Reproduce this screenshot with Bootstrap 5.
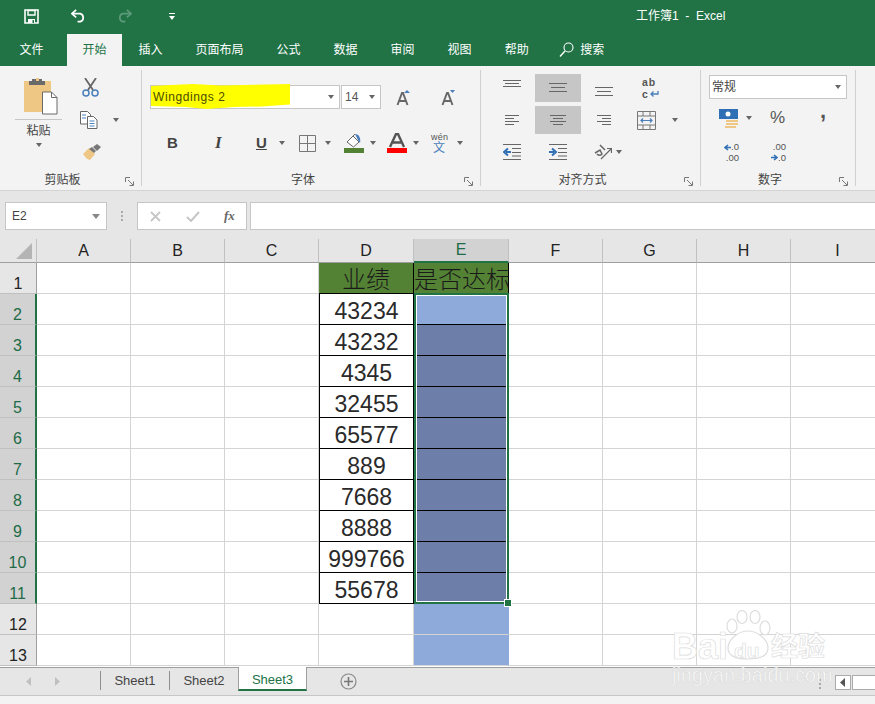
<!DOCTYPE html>
<html lang="zh-CN">
<head>
<meta charset="UTF-8" />
<title>工作簿1 - Excel</title>
<link href="https://cdn.jsdelivr.net/npm/bootstrap@5.3.2/dist/css/bootstrap.min.css" rel="stylesheet" />
<style>
  html, body { margin: 0; width: 875px; height: 704px; overflow: hidden; }
  body { position: relative; background: #f3f3f3; color: #444; font: 12px "Liberation Sans", "Noto Sans CJK SC", sans-serif; }
  svg { display: block; flex: none; }

  /* title bar and tabs */
  .xl-top { background: #217346; color: #fff; height: 66px; }
  .titlebar { height: 34px; padding-bottom: 2px; }
  .qat-save { margin-left: 24px; }
  .qat-undo { margin-left: 32px; }
  .qat-redo { margin-left: 31px; }
  .qat-more { margin-left: 37px; }
  .doc-title { margin-left: 461px; font-size: 12px; padding-bottom: 4px; white-space: pre; }
  .tabs { height: 32px; padding-left: 3px; }
  .tabs span { padding: 8px 16.5px 0; line-height: 16px; font-size: 12px; white-space: nowrap; }
  .tabs span.active { background: #f3f3f3; color: #217346; margin-left: 7px; padding: 8px 15.5px 0; }
  .tabs span.search { padding-left: 6px; }
  .tabs svg { margin: 8px 0 0 14px; }

  /* ribbon */
  .ribbon { height: 125px; background: #f3f3f3; border-bottom: 1px solid #d4d4d4; }
  .group { margin-top: 4px; height: 116px; border-right: 1px solid #d0d0d0; }
  .g-clip { width: 142px; }
  .g-font { width: 339px; }
  .g-align { width: 220px; }
  .g-num { width: 155px; }
  .group-body { height: 104px; display: flow-root; }
  .group-foot { height: 12px; line-height: 12px; display: grid; grid-template-columns: 1fr auto 1fr; font-size: 12px; padding-right: 16px; }
  .group-foot svg { justify-self: end; margin: 3px -9px 0 0; }
  .arr { width: 0; height: 0; border: 3px solid transparent; border-top: 4px solid #666; border-bottom: 0; flex: none; }

  .paste-col { width: 47px; margin-left: 15px; }
  .paste-col svg { margin: 7px 0 4px 8px; }
  .paste-col .line { border-top: 1px solid #c6c6c6; }
  .paste-col .lbl { text-align: center; font-size: 12px; margin-top: 3px; line-height: 16px; }
  .paste-col .arr { margin: 4px auto 0; }
  .clip-col svg.cut { margin: 8px 0 0 20px; }
  .clip-row { margin: 14px 0 0 18px; }
  .clip-row .arr { margin-left: 15px; }
  .clip-col svg.brush { margin: 15px 0 0 21px; }

  .combo { background: #fff; border: 1px solid #c6c6c6; height: 24px; }
  .combo .arr { position: absolute; right: 5px; top: 9px; }
  .font-row1 { padding: 15px 0 0 8px; }
  .font-name { width: 190px; line-height: 22px; padding-left: 2px; color: #4a4a00; font-size: 12px; letter-spacing: .6px; }
  .font-name b { font-weight: 400; position: relative; z-index: 1; }
  .font-name::before { content: ""; position: absolute; left: 0; top: -2px; width: 139px; height: 25px; background: #ff0; clip-path: polygon(0 8%, 30% 0, 50% 6%, 100% 0, 100% 82%, 80% 90%, 60% 92%, 40% 100%, 25% 92%, 0 88%); }
  .font-size { width: 40px; margin-left: 1px; line-height: 22px; padding-left: 3px; color: #555; font-size: 12px; }
  .grow { margin-left: 15px; }
  .shrink { margin-left: 30px; }
  .font-row2 { height: 30px; margin-top: 19px; }
  .fmt { font-size: 15px; line-height: 20px; color: #444; font-weight: 700; flex: none; }
  .f-b { margin-left: 25px; width: 11px; }
  .f-i { margin-left: 37px; width: 9px; font-style: italic; font-family: "Liberation Serif", serif; font-size: 17px; }
  .f-u { margin-left: 32px; width: 12px; text-decoration: underline; }
  .a1 { margin-left: 11px; }
  .bd { margin-left: 14px; }
  .a2 { margin-left: 9px; }
  .fill { margin-left: 13px; }
  .a3 { margin-left: 6px; }
  .fc { margin-left: 11px; }
  .a4 { margin-left: 6px; }
  .wen { margin-left: 12px; width: 16px; text-align: center; color: #555; }
  .wen div { font-size: 9px; height: 9px; line-height: 9px; letter-spacing: .3px; }
  .wen p { margin: 0; font-size: 12px; height: 12px; line-height: 12px; color: #4a7ebb; }
  .a5 { margin-left: 10px; }

  .al-grid { display: grid; grid-template-columns: 46px 46px 46px; grid-auto-rows: 28px; row-gap: 4px; margin: 4px 0 0 8px; }
  .al-cell { display: flex; align-items: center; justify-content: center; }
  .al-cell.on { background: #c6c6c6; }
  .al-side { margin-left: 10px; width: 60px; padding-top: 4px; }
  .al-side > * { height: 28px; margin-bottom: 4px; }
  .al-side .arr { margin-left: 16px; }
  .wrap-txt { font-size: 10.500px; line-height: 12px; color: #555; font-weight: 700; letter-spacing: 1px; padding: 2px 0 0 5px; }
  .wrap-txt svg { margin: 3px 0 0 1px; }

  .num-combo { width: 138px; height: 24px; margin: 5px 0 0 8px; line-height: 22px; padding-left: 2px; color: #444; }
  .num-row1 { margin-top: 5px; height: 28px; }
  .cur { margin-left: 18px; }
  .cur-arr { margin-left: 7px; }
  .num-row2 { margin-top: 10px; }
  .pct { margin-left: 18px; font-size: 17px; color: #555; line-height: 20px; width: 18px; }
  .comma { margin-left: 32px; font-size: 22px; font-weight: 700; color: #555; line-height: 18px; margin-top: -15px; }
  .dec { width: 26px; font-size: 9.500px; line-height: 10.500px; color: #555; text-align: right; }
  .dec span { display: inline-flex; align-items: center; }
  .dec-l { margin: 0 21px 0 12px; }

  /* formula bar */
  .formula { height: 48px; background: #e6e6e6; padding-top: 11px; }
  .namebox { width: 102px; height: 28px; margin-left: 5px; background: #fff; border: 1px solid #c6c6c6; padding: 0 6px; font-size: 12px; line-height: 26px; }
  .namebox .arr { border-width: 4px; border-top: 5px solid #888; border-bottom: 0; }
  .dots { width: 2px; height: 10px; margin: 9px 14px 0 14px; background: repeating-linear-gradient(#aaa 0 2px, transparent 2px 4px); }
  .fxbox { width: 110px; height: 28px; background: #fff; border: 1px solid #c6c6c6; }
  .fx-x { margin-left: 12px; }
  .fx-ok { margin-left: 25px; }
  .fxbox i { margin-left: 24px; font: italic 700 13px "Liberation Serif", serif; color: #666; }
  .fbar { flex: 1; height: 28px; margin-left: 3px; background: #fff; border: 1px solid #c6c6c6; border-right: 0; }

  /* sheet */
  .sheet-wrap { height: 428px; overflow: hidden; background: #fff; position: relative; }
  .sheet { table-layout: fixed; border-collapse: separate; border-spacing: 0; width: 883px; font-size: 16px; color: #222; }
  .sheet th { background: #e6e6e6; font-weight: 400; text-align: center; padding: 0; }
  .sheet thead th { height: 24px; border-right: 1px solid #c0c0c0; border-bottom: 1px solid #9f9f9f; line-height: 22px; }
  .sheet tbody th { border-right: 1px solid #9f9f9f; border-bottom: 1px solid #c0c0c0; vertical-align: bottom; line-height: 18px; }
  .sheet td { height: 31px; padding: 0; border-right: 1px solid #d4d4d4; border-bottom: 1px solid #d4d4d4; text-align: center; vertical-align: bottom; font-size: 23px; line-height: 25px; white-space: nowrap; overflow: visible; color: #2a2a2a; }
  .sheet thead th.sel-col { background: #d2d2d2; color: #1d6b47; border-bottom: 2px solid #217346; }
  .sheet tbody th.sel-row { background: #d2d2d2; color: #1d6b47; border-right: 2px solid #217346; }
  .sheet td.b { border: 0 solid #000; border-width: 0 1px 1px 0; }
  .sheet td.bl { border-left-width: 1px; }
  .sheet tbody tr:first-child td.b { border-color: #000; }
  .sheet td.hd { background: #548235; color: #1a1a1a; font-weight: 300; font-size: 24px; font-family: "Noto Sans CJK SC", sans-serif; line-height: 30px; }
  .sheet td.light { background: #8eaadb; }
  .sheet td.dark { background: #6d7fa8; }
  .sheet td.nb { border-right-color: #8eaadb; border-bottom-color: #d4d4d4; }
  .sel-box { position: absolute; left: 414px; top: 54px; width: 95px; height: 311px; border: 2px solid #217346; outline: 1px solid #fff; outline-offset: -3px; pointer-events: none; }
  .sel-box::after { content: ""; position: absolute; right: -4px; bottom: -4px; width: 6px; height: 6px; background: #217346; outline: 1px solid #fff; }

  /* sheet tabs */
  .sheetbar { height: 29px; background: #e6e6e6; border-top: 1px solid #9f9f9f; border-bottom: 1px solid #c6c6c6; font-size: 13px; }
  .sheetbar .nav-l { margin: 9px 0 0 26px; }
  .sheetbar .nav-r { margin: 9px 0 0 24px; }
  .stab { height: 25px; line-height: 22px; text-align: center; width: 69px; }
  .stab.plain { border-left: 1px solid #8f8f8f; height: 19px; line-height: 19px; margin-top: 3px; }
  .stab.first { margin-left: 40px; }
  .stab.active { background: #fff; color: #217346; width: 69px; height: 24px; border: 1px solid #9f9f9f; border-top: 0; border-bottom: 2px solid #217346; margin-top: -1px; line-height: 25px; }
  .add { margin: 5px 0 0 33px; }
  .rdots { margin: 11px 0 0 462px; width: 2px; height: 12px; background: repeating-linear-gradient(#aaa 0 2px, transparent 2px 4px); }
  .hbtn { width: 16px; height: 15px; margin: 7px 0 0 14px; background: #fff; border: 1px solid #ababab; }
  .hbtn svg { margin: 2px 0 0 4px; }
  .hthumb { flex: 1; height: 15px; margin: 7px 0 0 1px; background: #fff; border: 1px solid #ababab; border-right: 0; }
  .status { height: 8px; background: #f3f3f3; }

  /* watermark */
  .wm { position: absolute; left: 672px; top: 610px; width: 160px; height: 76px; color: #fff; pointer-events: none; }
  .wm span { position: absolute; -webkit-text-stroke: .7px #ddd; line-height: 1; white-space: nowrap; }
  .wm svg { position: absolute; left: 53px; top: 0; }
  .wm-bai { left: 0; top: 19px; font: 700 36px "Liberation Sans", sans-serif; }
  .wm-du { left: 62px; top: 30px; font: 700 21px "Liberation Sans", sans-serif; }
  .wm-cn { left: 99px; top: 21px; font: 700 27px "Noto Sans CJK SC", sans-serif; }
  .wm-url { left: 0; top: 56px; font: 400 19.500px "Liberation Sans", sans-serif; letter-spacing: .2px; }
</style>
</head>
<body>

<!-- title bar + tabs -->
<div class="xl-top">
  <div class="titlebar d-flex align-items-center">
    <svg class="qat-save" width="15" height="15" viewBox="0 0 15 15"><path d="M1 1h13v13H1z" fill="none" stroke="#fff" stroke-width="1.600"/><path d="M4 1.500h7v4.500H4z" fill="none" stroke="#fff" stroke-width="1.400"/><path d="M4 10h7v4H4z" fill="#fff"/><path d="M8.500 11h1.500v3H8.500z" fill="#217346"/></svg>
    <svg class="qat-undo" width="15" height="14" viewBox="0 0 16 14"><path d="M1 4.500h9a4.500 4.500 0 0 1 0 8.500H7" fill="none" stroke="#fff" stroke-width="1.800"/><path d="M5.500 0.500L1 4.500l4.500 4" fill="none" stroke="#fff" stroke-width="1.800"/></svg>
    <svg class="qat-redo" width="15" height="14" viewBox="0 0 16 14"><path d="M15 4.500H6a4.500 4.500 0 0 0 0 8.500h3" fill="none" stroke="#5b9a7b" stroke-width="1.800"/><path d="M10.500 0.500l4.500 4-4.500 4" fill="none" stroke="#5b9a7b" stroke-width="1.800"/></svg>
    <svg class="qat-more" width="6" height="7" viewBox="0 0 6 7"><path d="M0 0h6v1H0z" fill="#fff"/><path d="M0 3h6L3 7z" fill="#fff"/></svg>
    <div class="doc-title">工作簿1  -  Excel</div>
  </div>
  <div class="tabs d-flex">
    <span>文件</span><span class="active">开始</span><span>插入</span><span>页面布局</span><span>公式</span><span>数据</span><span>审阅</span><span>视图</span><span>帮助</span>
    <svg width="15" height="16" viewBox="0 0 15 16"><circle cx="9.500" cy="5.500" r="4.500" fill="none" stroke="#fff" stroke-width="1.100"/><path d="M6 9L1 14.500" stroke="#fff" stroke-width="1.400"/></svg>
    <span class="search">搜索</span>
  </div>
</div>

<!-- ribbon -->
<div class="ribbon d-flex">
  <div class="group g-clip">
    <div class="group-body d-flex">
      <div class="paste-col">
        <svg width="35" height="38" viewBox="0 0 35 38"><path d="M1 4h27v31H1z" fill="#eec784"/><path d="M9 2h10v2h3v4H6V4h3z" fill="#6a6a6a"/><path d="M13 1h3v3h-3z" fill="#eec784"/><path d="M19.500 15h9l5.500 5.500V37H19.500z" fill="#fff" stroke="#6a6a6a"/><path d="M28.500 15v5.500H34" fill="none" stroke="#6a6a6a"/></svg>
        <div class="line"></div>
        <div class="lbl">粘贴</div>
        <div class="arr"></div>
      </div>
      <div class="clip-col">
        <svg class="cut" width="17" height="19" viewBox="0 0 17 19"><path d="M3 0l8 12M14 0L6 12" stroke="#666" stroke-width="1.800" fill="none"/><circle cx="4" cy="15" r="3" fill="none" stroke="#4a7ebb" stroke-width="1.500"/><circle cx="13" cy="15" r="3" fill="none" stroke="#4a7ebb" stroke-width="1.500"/></svg>
        <div class="clip-row d-flex align-items-center">
          <svg width="18" height="18" viewBox="0 0 18 18"><path d="M.5.500h7l3 3V13H.5z" fill="#fff" stroke="#666"/><path d="M7.500 5.500h6l3.500 3.500v8.500H7.500z" fill="#fff" stroke="#666"/><path d="M2 4h4M2 7h4M9.500 10h5M9.500 12.500h5M9.500 15h5" stroke="#4a7ebb"/></svg>
          <div class="arr"></div>
        </div>
        <svg class="brush" width="18" height="16" viewBox="0 0 18 16"><path d="M0 10l6-6 6 6-5 6c-2 0-5-3-7-6z" fill="#eec784"/><path d="M6 5l3-2 4 4-2 2z" fill="#777"/><path d="M10 3l4-3 4 3-4 4z" fill="#777"/></svg>
      </div>
    </div>
    <div class="group-foot"><i></i><span>剪贴板</span><svg width="9" height="9" viewBox="0 0 9 9"><path d="M.5 5V.500H5M3 3l5 5M8.500 4.500v4h-4" fill="none" stroke="#777"/></svg></div>
  </div>

  <div class="group g-font">
    <div class="group-body">
      <div class="font-row1 d-flex align-items-center">
        <div class="combo position-relative font-name"><b>Wingdings 2</b><div class="arr"></div></div>
        <div class="combo position-relative font-size">14<div class="arr"></div></div>
        <svg class="grow" width="15" height="18" viewBox="0 0 15 18"><path d="M1.500 17L6 5h1l4.500 12M3 13h7" fill="none" stroke="#666" stroke-width="1.900"/><path d="M8 5l3-3 3 3z" fill="#4a7ebb"/></svg>
        <svg class="shrink" width="15" height="18" viewBox="0 0 15 18"><path d="M1.500 17L6 5h1l4.500 12M3 13h7" fill="none" stroke="#666" stroke-width="1.900"/><path d="M9 2l2.500 3L14 2z" fill="#4a7ebb"/></svg>
      </div>
      <div class="font-row2 d-flex align-items-center">
        <span class="fmt f-b">B</span><span class="fmt f-i">I</span><span class="fmt f-u">U</span>
        <div class="arr a1"></div>
        <svg class="bd" width="17" height="17" viewBox="0 0 17 17"><path d="M.5.500h16v16H.5zM8.500.500v16M.5 8.500h16" fill="none" stroke="#777"/></svg>
        <div class="arr a2"></div>
        <svg class="fill" width="20" height="20" viewBox="0 0 20 20"><path d="M3 9l6-6 6 6-5.500 5z" fill="#fff" stroke="#666"/><path d="M9 3l2-2" stroke="#666"/><path d="M11 1c4 0 6 4 5 9l-2-3z" fill="#4a7ebb"/><path d="M0 15h20v5H0z" fill="#548235"/></svg>
        <div class="arr a3"></div>
        <svg class="fc" width="20" height="20" viewBox="0 0 20 20"><path d="M3 14L9 1h2l6 13M5.500 9.500h9" fill="none" stroke="#555" stroke-width="2.400"/><path d="M0 15h20v5H0z" fill="#f00"/></svg>
        <div class="arr a4"></div>
        <div class="wen"><div>wén</div><p>文</p></div>
        <div class="arr a5"></div>
      </div>
    </div>
    <div class="group-foot"><i></i><span>字体</span><svg width="9" height="9" viewBox="0 0 9 9"><path d="M.5 5V.500H5M3 3l5 5M8.500 4.500v4h-4" fill="none" stroke="#777"/></svg></div>
  </div>

  <div class="group g-align">
    <div class="group-body d-flex">
      <div class="al-grid">
        <div class="al-cell"><svg class="mb-2" width="18" height="8" viewBox="0 0 18 8"><path d="M0 .500h18M2 3.500h14M0 6.500h18" stroke="#666"/></svg></div>
        <div class="al-cell on"><svg width="18" height="10" viewBox="0 0 18 10"><path d="M0 .500h18M2 4.500h14M0 8.500h18" stroke="#666"/></svg></div>
        <div class="al-cell"><svg class="mt-2" width="18" height="10" viewBox="0 0 18 10"><path d="M0 .500h18M2 4.500h14M0 8.500h18" stroke="#666"/></svg></div>
        <div class="al-cell"><svg width="14" height="10" viewBox="0 0 14 10"><path d="M0 .500h14M0 3.500h9M0 6.500h14M0 9.500h9" stroke="#666"/></svg></div>
        <div class="al-cell on"><svg width="16" height="10" viewBox="0 0 16 10"><path d="M0 .500h16M3 3.500h10M0 6.500h16M3 9.500h10" stroke="#666"/></svg></div>
        <div class="al-cell"><svg width="14" height="10" viewBox="0 0 14 10"><path d="M0 .500h14M5 3.500h9M0 6.500h14M5 9.500h9" stroke="#666"/></svg></div>
        <div class="al-cell"><svg width="18" height="16" viewBox="0 0 18 16"><path d="M0 .500h18M9 4.500h9M9 8.500h9M9 12h9M0 15.500h18" stroke="#666"/><path d="M8 8H3M5 4.500L1 8l4 3.500" fill="none" stroke="#2f6fb5" stroke-width="2"/></svg></div>
        <div class="al-cell"><svg width="18" height="16" viewBox="0 0 18 16"><path d="M0 .500h18M9 4.500h9M9 8.500h9M9 12h9M0 15.500h18" stroke="#666"/><path d="M0 8h5M3 4.500L7 8l-4 3.500" fill="none" stroke="#2f6fb5" stroke-width="2"/></svg></div>
        <div class="al-cell"><svg class="ms-2" width="18" height="16" viewBox="0 0 18 16"><path d="M7 15L17 5M13 4.500h4.500V9" fill="none" stroke="#666" stroke-width="1.200"/><path d="M1 9l5-3 2 4c-2 2-4 1-5 0M6 1l5 5" fill="none" stroke="#666" stroke-width="1.500"/></svg><div class="arr ms-1"></div></div>
      </div>
      <div class="al-side">
        <div class="wrap-txt"><div>ab</div><div class="d-flex">c<svg width="9" height="7" viewBox="0 0 9 7"><path d="M8 0v3H1M3.500 .5L1 3l2.500 2.500" fill="none" stroke="#4a7ebb" stroke-width="1.300"/></svg></div></div>
        <div class="d-flex align-items-center"><svg width="19" height="19" viewBox="0 0 19 19"><path d="M.5.500h18v18H.5zM.5 5h18M.5 14h18M6 .500V5M13 .500V5M6 14v4.500M13 14v4.500" fill="none" stroke="#777"/><path d="M4 9.500h11M6 7.500l-2 2 2 2M13 7.500l2 2-2 2" fill="none" stroke="#4a7ebb" stroke-width="1.200"/></svg><div class="arr"></div></div>
      </div>
    </div>
    <div class="group-foot"><i></i><span>对齐方式</span><svg width="9" height="9" viewBox="0 0 9 9"><path d="M.5 5V.500H5M3 3l5 5M8.500 4.500v4h-4" fill="none" stroke="#777"/></svg></div>
  </div>

  <div class="group g-num">
    <div class="group-body">
      <div class="combo position-relative num-combo">常规<div class="arr"></div></div>
      <div class="num-row1 d-flex align-items-center">
        <svg class="cur" width="20" height="19" viewBox="0 0 20 19"><path d="M0 0h19v10H0z" fill="#2f6fb5"/><circle cx="9" cy="5" r="2.500" fill="#fff"/><path d="M7 11h12v2H7zM7 14h12v2H7zM6 17h11v2H6z" fill="#eec784"/></svg>
        <div class="arr cur-arr"></div>
        <span class="pct">%</span>
        <span class="comma">,</span>
      </div>
      <div class="num-row2 d-flex">
        <div class="dec dec-l"><span><svg width="7" height="7" viewBox="0 0 7 7"><path d="M7 3.500H2M4 1L1 3.500 4 6" fill="none" stroke="#2f6fb5" stroke-width="1.600"/></svg>.0</span><br>.00</div>
        <div class="dec"><span>.00</span><br><span><svg width="7" height="7" viewBox="0 0 7 7"><path d="M0 3.500h5M3 1l3 2.500L3 6" fill="none" stroke="#2f6fb5" stroke-width="1.600"/></svg>.0</span></div>
      </div>
    </div>
    <div class="group-foot"><i></i><span>数字</span><svg width="9" height="9" viewBox="0 0 9 9"><path d="M.5 5V.500H5M3 3l5 5M8.500 4.500v4h-4" fill="none" stroke="#777"/></svg></div>
  </div>
</div>

<!-- formula bar -->
<div class="formula d-flex">
  <div class="namebox d-flex justify-content-between align-items-center"><span>E2</span><div class="arr"></div></div>
  <div class="dots"></div>
  <div class="fxbox d-flex align-items-center">
    <svg class="fx-x" width="11" height="11" viewBox="0 0 11 11"><path d="M1 1l9 9M10 1l-9 9" stroke="#c6c6c6" stroke-width="1.800"/></svg>
    <svg class="fx-ok" width="14" height="11" viewBox="0 0 14 11"><path d="M1 6l4 4 8-9" fill="none" stroke="#c6c6c6" stroke-width="2"/></svg>
    <i>fx</i>
  </div>
  <div class="fbar"></div>
</div>

<!-- sheet -->
<div class="sheet-wrap">
  <table class="sheet">
    <colgroup><col width="37"><col width="94"><col width="94"><col width="94"><col width="95"><col width="95"><col width="94"><col width="94"><col width="94"><col width="94"></colgroup>
    <thead><tr><th><svg class="ms-auto me-1" width="16" height="16" viewBox="0 0 16 16"><path d="M16 0v16H0z" fill="#b4b4b4"/></svg></th><th>A</th><th>B</th><th>C</th><th>D</th><th class="sel-col">E</th><th>F</th><th>G</th><th>H</th><th>I</th></tr></thead>
    <tbody>
      <tr><th>1</th><td></td><td></td><td></td><td class="b hd">业绩</td><td class="b hd">是否达标</td><td></td><td></td><td></td><td></td></tr>
      <tr><th class="sel-row">2</th><td></td><td></td><td></td><td class="b bl">43234</td><td class="b light"></td><td></td><td></td><td></td><td></td></tr>
      <tr><th class="sel-row">3</th><td></td><td></td><td></td><td class="b bl">43232</td><td class="b dark"></td><td></td><td></td><td></td><td></td></tr>
      <tr><th class="sel-row">4</th><td></td><td></td><td></td><td class="b bl">4345</td><td class="b dark"></td><td></td><td></td><td></td><td></td></tr>
      <tr><th class="sel-row">5</th><td></td><td></td><td></td><td class="b bl">32455</td><td class="b dark"></td><td></td><td></td><td></td><td></td></tr>
      <tr><th class="sel-row">6</th><td></td><td></td><td></td><td class="b bl">65577</td><td class="b dark"></td><td></td><td></td><td></td><td></td></tr>
      <tr><th class="sel-row">7</th><td></td><td></td><td></td><td class="b bl">889</td><td class="b dark"></td><td></td><td></td><td></td><td></td></tr>
      <tr><th class="sel-row">8</th><td></td><td></td><td></td><td class="b bl">7668</td><td class="b dark"></td><td></td><td></td><td></td><td></td></tr>
      <tr><th class="sel-row">9</th><td></td><td></td><td></td><td class="b bl">8888</td><td class="b dark"></td><td></td><td></td><td></td><td></td></tr>
      <tr><th class="sel-row">10</th><td></td><td></td><td></td><td class="b bl">999766</td><td class="b dark"></td><td></td><td></td><td></td><td></td></tr>
      <tr><th class="sel-row">11</th><td></td><td></td><td></td><td class="b bl">55678</td><td class="b dark"></td><td></td><td></td><td></td><td></td></tr>
      <tr><th>12</th><td></td><td></td><td></td><td></td><td class="light nb"></td><td></td><td></td><td></td><td></td></tr>
      <tr><th>13</th><td></td><td></td><td></td><td></td><td class="light nb"></td><td></td><td></td><td></td><td></td></tr>
    </tbody>
  </table>
  <div class="sel-box"></div>
</div>

<!-- sheet tabs -->
<div class="sheetbar d-flex">
  <svg class="nav-l" width="5" height="9" viewBox="0 0 5 9"><path d="M5 0v9L0 4.500z" fill="#c0c0c0"/></svg>
  <svg class="nav-r" width="5" height="9" viewBox="0 0 5 9"><path d="M0 0v9l5-4.500z" fill="#c0c0c0"/></svg>
  <div class="stab plain first">Sheet1</div>
  <div class="stab plain">Sheet2</div>
  <div class="stab active">Sheet3</div>
  <svg class="add" width="17" height="17" viewBox="0 0 17 17"><circle cx="8.500" cy="8.500" r="7.500" fill="none" stroke="#8a8a8a" stroke-width="1.200"/><path d="M8.500 4v9M4 8.500h9" stroke="#777" stroke-width="1.600"/></svg>
  <div class="rdots"></div>
  <div class="hbtn"><svg width="5" height="9" viewBox="0 0 5 9"><path d="M5 0v9L0 4.500z" fill="#555"/></svg></div>
  <div class="hthumb"></div>
</div>
<div class="status"></div>

<!-- watermark -->
<div class="wm">
  <svg width="46" height="50" viewBox="0 0 46 50"><g fill="#fff" stroke="#ddd" stroke-width="1.200"><ellipse cx="7" cy="16" rx="5" ry="7"/><ellipse cx="17" cy="7" rx="5" ry="6.500"/><ellipse cx="30" cy="7" rx="5" ry="6.500"/><ellipse cx="40" cy="18" rx="5" ry="7"/><path d="M23 21c10 0 20 9 20 17 0 7-6 11-20 11S3 45 3 38c0-8 10-17 20-17z"/></g></svg>
  <span class="wm-bai">Bai</span><span class="wm-du">du</span><span class="wm-cn">经验</span><span class="wm-url">jingyan.baidu.com</span>
</div>

<script src="https://cdn.jsdelivr.net/npm/bootstrap@5.3.2/dist/js/bootstrap.bundle.min.js"></script>
</body>
</html>
